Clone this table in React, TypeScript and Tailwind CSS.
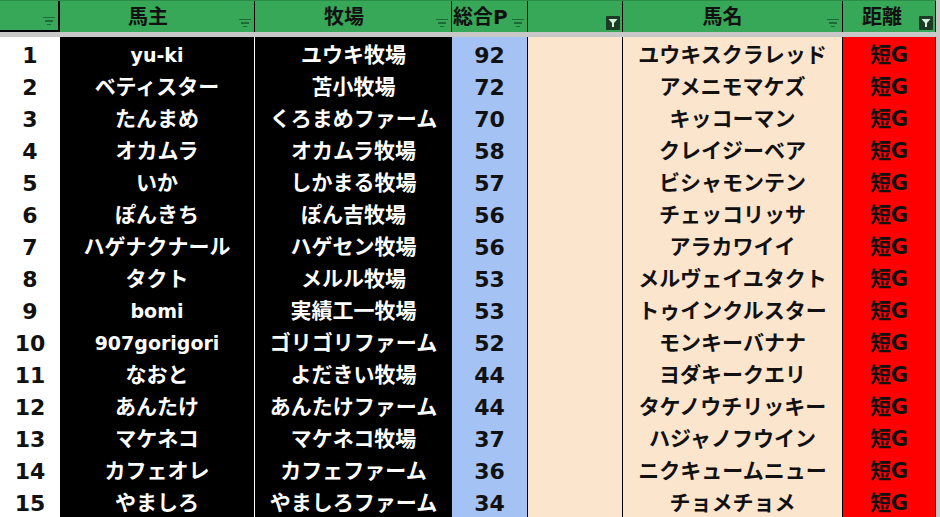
const rows: [number, string, string, number, string][] = [
  [1, "yu-ki", "ユウキ牧場", 92, "ユウキスクラレッド"],
  [2, "ベティスター", "苫小牧場", 72, "アメニモマケズ"],
  [3, "たんまめ", "くろまめファーム", 70, "キッコーマン"],
  [4, "オカムラ", "オカムラ牧場", 58, "クレイジーベア"],
  [5, "いか", "しかまる牧場", 57, "ビシャモンテン"],
  [6, "ぽんきち", "ぽん吉牧場", 56, "チェッコリッサ"],
  [7, "ハゲナクナール", "ハゲセン牧場", 56, "アラカワイイ"],
  [8, "タクト", "メルル牧場", 53, "メルヴェイユタクト"],
  [9, "bomi", "実績工一牧場", 53, "トゥインクルスター"],
  [10, "907gorigori", "ゴリゴリファーム", 52, "モンキーバナナ"],
  [11, "なおと", "よだきい牧場", 44, "ヨダキークエリ"],
  [12, "あんたけ", "あんたけファーム", 44, "タケノウチリッキー"],
  [13, "マケネコ", "マケネコ牧場", 37, "ハジャノフウイン"],
  [14, "カフェオレ", "カフェファーム", 36, "ニクキュームニュー"],
  [15, "やましろ", "やましろファーム", 34, "チョメチョメ"],
];

const cols = "grid grid-cols-[60px_195px_197px_76px_95px_220px_93px]";

function FilterIcon() {
  return (
    <span className="absolute bottom-[5px] right-[3px] flex w-[12px] flex-col items-center gap-[2px]">
      <span className="h-[1.5px] w-[12px] bg-[#1e6a36]" />
      <span className="h-[1.5px] w-[8px] bg-[#1e6a36]" />
      <span className="h-[1.5px] w-[4px] bg-[#1e6a36]" />
    </span>
  );
}

function ActiveFilter() {
  return (
    <span className="absolute bottom-[2px] right-[2px] flex h-[14px] w-[14px] items-center justify-center rounded-[1px] bg-[#1b3b26]">
      <svg width="10" height="10" viewBox="0 0 10 10">
        <path d="M0.5 1 H9.5 L6 5 V9 H4 V5 Z" fill="#d6efdc" />
      </svg>
    </span>
  );
}

function Head({ label, icon, className = "" }: { label: string; icon: "off" | "on"; className?: string }) {
  return (
    <div className={`relative flex h-full items-center justify-center border-r border-black text-[20px] ${className}`}>
      {label}
      {icon === "off" ? <FilterIcon /> : <ActiveFilter />}
    </div>
  );
}

const latin = (s: string) => /^[\x00-\x7f]+$/.test(s);

export default function App() {
  return (
    <div className="flex h-[517px] w-[940px] bg-[#c8c8c8] font-['DejaVu_Sans','Noto_Sans_CJK_JP',sans-serif] font-bold text-[#111]">
      <div className="w-[936px] bg-white">
        <div className={`${cols} h-[32px] border-t border-[#2b8c47] bg-[#36a857]`}>
          <div className="relative h-full border-b-2 border-r-2 border-black">
            <FilterIcon />
          </div>
          <Head label="馬主" icon="off" className="pr-[18px]" />
          <Head label="牧場" icon="off" className="pr-[18px]" />
          <Head label="総合P" icon="off" className="justify-start pl-[1px]" />
          <Head label="" icon="on" />
          <Head label="馬名" icon="off" className="pr-[20px]" />
          <Head label="距離" icon="on" className="pr-[14px]" />
        </div>
        <div className="h-[5px] bg-[#c8c8c8]" />
        {rows.map(([n, owner, farm, pts, horse]) => (
          <div key={n} className={`${cols} h-[32px] text-[21px]`}>
            <div className="flex items-center justify-center border-b border-black bg-white pt-[2px] text-[22px]">{n}</div>
            <div
              className={`flex items-center justify-center border-b border-r border-white bg-black pt-[2px] text-white ${
                latin(owner) ? "text-[19px]" : ""
              }`}
            >
              {owner}
            </div>
            <div className="flex items-center justify-center border-b border-white bg-black pt-[2px] text-white">{farm}</div>
            <div className="flex items-center justify-center border-b border-r border-black bg-[#a4c2f4] pt-[2px] text-[22px]">{pts}</div>
            <div className="border-b border-r border-black bg-[#fce5cd]" />
            <div className="flex items-center justify-center border-b border-r border-black bg-[#fce5cd] pt-[2px]">{horse}</div>
            <div className="flex items-center justify-center border-b border-r border-black bg-[#ff0000] pt-[2px]">短G</div>
          </div>
        ))}
      </div>
    </div>
  );
}
